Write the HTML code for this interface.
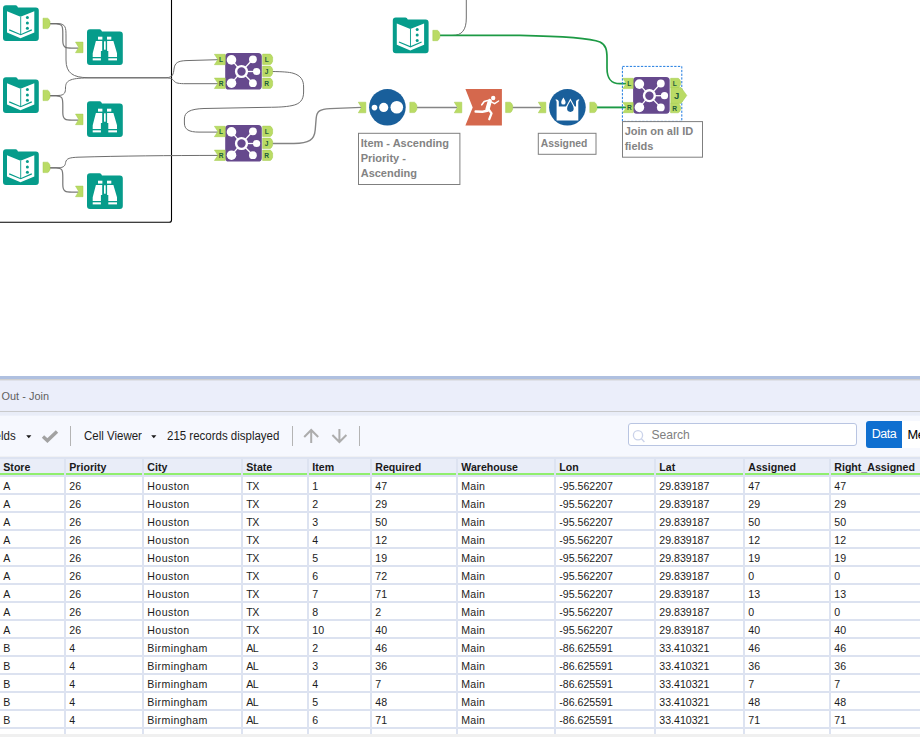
<!DOCTYPE html>
<html lang="en"><head><meta charset="utf-8"><title>Alteryx workflow - Out - Join</title>
<style>
html,body{margin:0;padding:0;background:#fff}
body{width:920px;height:737px;overflow:hidden;position:relative;font-family:"Liberation Sans",sans-serif;color:#1a1a1a}
#panel{position:absolute;left:0;top:376px;width:920px;height:361px;background:#f5f7fd;overflow:hidden}
#band{position:absolute;left:0;top:0;width:920px;height:3px;background:#afc0e0}
#band2{position:absolute;left:0;top:3px;width:920px;height:2px;background:linear-gradient(#cfcfd0 0,#cfcfd0 1px,#dfe1e9 1px,#dfe1e9 2px)}
#title{position:absolute;left:0;top:5px;width:920px;height:30px;background:#ebeefa}
#title span{position:absolute;left:1.4px;top:8.5px;font-size:10.9px;letter-spacing:0.05px;color:#606060;white-space:nowrap}
#tline{position:absolute;left:0;top:35px;width:920px;height:1px;background:#c9cacc}
#tb{position:absolute;left:0;top:36px;width:920px;height:45px;background:linear-gradient(#e9edf8 0,#e9edf8 3px,#f6f8fe 4.5px,#f6f8fe 43.5px,#f0f1f4 44px,#f0f1f4 45px)}
.t{position:absolute;white-space:nowrap;font-size:12.5px;color:#1c1c1c;top:16.5px;transform:scaleX(0.919);transform-origin:0 0}
.vs{position:absolute;top:14px;width:1px;height:20px;background:#b4b4b4}
.dd{position:absolute;top:22.6px}
#search{position:absolute;left:628px;top:11px;width:227px;height:21px;border:1px solid #b9c5e2;border-radius:3px;background:#fff}
#search span{position:absolute;left:22.4px;top:4.2px;font-size:12.1px;color:#808080}
#data{position:absolute;left:866px;top:9px;width:36px;height:26.5px;background:#0f6fd0;border-radius:3px 0 0 3px;color:#fff;font-size:12.5px;letter-spacing:-0.45px;line-height:27px;text-align:center}
#meta{position:absolute;left:902px;top:9px;width:18px;height:26.5px;background:#fff;color:#000;font-size:12.8px;letter-spacing:-0.3px;line-height:27px;white-space:nowrap;overflow:hidden;text-indent:5.4px}
#grid{position:absolute;left:0;top:81px;width:920px;height:276.5px;background:#fff;overflow:hidden}
#hdr{position:absolute;left:0;top:0;width:920px;height:14px;background:#e9edf8;border-top:2px solid #dde3f1}
#gl{position:absolute;left:0;top:16px;width:920px;height:2px;background:#90ee6e}
#gl2{position:absolute;left:0;top:18px;width:920px;height:2px;background:#dde3f1}
.h{position:absolute;top:1.6px;font-weight:bold;font-size:10.6px;white-space:nowrap;color:#1a1a1a}
.r{position:absolute;left:0;width:920px;height:16px;border-bottom:2px solid #dce2f0}
.c{position:absolute;top:3px;font-size:10.6px;white-space:nowrap;color:#1c1c1c}
.cs{position:absolute;top:2px;width:2px;height:275px;background:#dde3f1}
#sb{position:absolute;left:0;top:357.5px;width:920px;height:4px;background:#f0f0f0}
</style></head><body>
<svg width="920" height="376" viewBox="0 0 920 376" style="position:absolute;left:0;top:0;display:block">
<style>.al{font:bold 6.6px "Liberation Sans",sans-serif;fill:#1d5c3c;text-anchor:middle}.an{font:bold 11px "Liberation Sans",sans-serif;fill:#838383}</style>
<path d="M171.5,-1 V220 Q171.5,222.3 169.2,222.3 H-1" fill="none" stroke="#000" stroke-width="1.1"/>
<path d="M50,23.8 H56 C62.6,23.8 62.8,26.5 62.8,33.5 V40.5 C62.8,48.0 66,48.1 72,48.1 H78.5" fill="none" stroke="#7a7a7a" stroke-width="1.25"/>
<path d="M50,95.8 H56 C62.6,95.8 62.8,98.5 62.8,105.5 V112.5 C62.8,120.0 66,120.1 72,120.1 H78.5" fill="none" stroke="#7a7a7a" stroke-width="1.25"/>
<path d="M50,167.8 H56 C62.6,167.8 62.8,170.5 62.8,177.5 V184.5 C62.8,192.0 66,192.1 72,192.1 H78.5" fill="none" stroke="#7a7a7a" stroke-width="1.25"/>
<path d="M50,23.5 H57 C66,23.5 66,28 66,36 V60 C66,73 73,77.6 88,77.7 H166 C173,77.6 173.4,74 174,69 C174.8,62.6 178,61 186,60.6 L218,59.7" fill="none" stroke="#6e6e6e" stroke-width="1.0"/>
<path d="M50,95.5 H58 C65,95.5 65.5,92 65.5,88 C65.5,81 69,78.1 88,77.9 H166 C171,78 172.6,79 174,81 C175.6,83.2 179,83.7 186,83.7 H218" fill="none" stroke="#6e6e6e" stroke-width="1.0"/>
<path d="M50,167.8 H58 C64.6,167.8 65.2,165 65.6,162.5 C66.4,158.2 70,157.6 78,157.2 C120,155.9 170,155.5 218,155.4" fill="none" stroke="#6e6e6e" stroke-width="1.0"/>
<path d="M272.4,71.5 C282,71.7 289,72 293,73.2 C301,75.6 303.6,80 303.6,87 V92 C303.6,100 300,104 292,105.6 C285,107 278,107.2 268,107.3 L204,108.5 C190,109 184.4,112 184.4,119 V123 C184.4,129.6 189,132.1 199,132.1 H218" fill="none" stroke="#6e6e6e" stroke-width="1.0"/>
<path d="M272.4,143.5 H294 C309,143.4 314.4,140 315.2,130 L316.2,118 C316.8,111 320,109.2 330,108.6 L361.5,107.4" fill="none" stroke="#838383" stroke-width="1.4"/>
<path d="M417,107.5 H457" fill="none" stroke="#858585" stroke-width="1.5"/>
<path d="M512.5,107.5 H541" fill="none" stroke="#858585" stroke-width="1.5"/>
<path d="M440,35.5 H452 C462,35.5 466.3,30 466.3,18 V-1" fill="none" stroke="#6e6e6e" stroke-width="1.0"/>
<path d="M440,35.4 H520 C560,36.2 590,38 600,42 C606,45 607,50 607,58 V68 C607,79 611,83.6 620,83.6 H626" fill="none" stroke="#1d9a45" stroke-width="1.7"/>
<path d="M597,107.4 H626" fill="none" stroke="#1d9a45" stroke-width="1.9"/>
<path d="M6,5.3 H15.6 Q17.2,5.3 18.0,7.5 H35.8 Q38.8,7.5 38.8,10.5 V38.099999999999994 Q38.8,41.099999999999994 35.8,41.099999999999994 H6 Q3,41.099999999999994 3,38.099999999999994 V8.3 Q3,5.3 6,5.3 Z" fill="#069c8b"/>
<g transform="translate(3,5.3)">
<path d="M4,6 L17.5,11.5 L31.3,6 V27.3 L17.5,33 L4,27.3 Z" fill="#fff"/>
<path d="M17.7,11.6 V29.4" stroke="#069c8b" stroke-width="0.9" fill="none"/>
<path d="M6.2,24.6 L17.7,29.4 L28.8,24.6" stroke="#069c8b" stroke-width="1.15" fill="none"/>
<circle cx="24.4" cy="12.1" r="1.5" fill="#069c8b"/>
<circle cx="24.4" cy="17.6" r="1.5" fill="#069c8b"/>
<circle cx="24.4" cy="23.0" r="1.5" fill="#069c8b"/>
</g>
<path d="M43,18.2 H47.6 Q48.9,18.5 50.0,21.3 V25.5 Q48.9,28.3 47.6,28.6 H43 Z" fill="#badb65" stroke="#a2cb4c" stroke-width="0.5" stroke-linejoin="round"/>
<path d="M90,29.3 H99.6 Q101.19999999999999,29.3 102.0,31.5 H119.8 Q122.8,31.5 122.8,34.5 V62.099999999999994 Q122.8,65.1 119.8,65.1 H90 Q87,65.1 87,62.099999999999994 V32.3 Q87,29.3 90,29.3 Z" fill="#069c8b"/>
<g transform="translate(87,29.3)" fill="#fff">
<rect x="11" y="7.4" width="4.4" height="2.9"/>
<rect x="20" y="7.4" width="4.3" height="2.9"/>
<path d="M8.9,11.6 H15.2 V21.6 H13.9 V27.8 H5.7 V24 Z"/>
<path d="M26.4,11.6 H20.1 V21.6 H21.3 V27.8 H30 V24 Z"/>
<rect x="5.7" y="29" width="8.2" height="2.1"/>
<rect x="21.3" y="29" width="8.7" height="2.1"/>
<rect x="17" y="12" width="1.7" height="8.4"/>
</g>
<path d="M75.5,42.099999999999994 H83.0 V52.699999999999996 H75.5 L78.7,47.4 Z" fill="#badb65" stroke="#a2cb4c" stroke-width="0.5" stroke-linejoin="round"/>
<path d="M6,77.3 H15.6 Q17.2,77.3 18.0,79.5 H35.8 Q38.8,79.5 38.8,82.5 V110.1 Q38.8,113.1 35.8,113.1 H6 Q3,113.1 3,110.1 V80.3 Q3,77.3 6,77.3 Z" fill="#069c8b"/>
<g transform="translate(3,77.3)">
<path d="M4,6 L17.5,11.5 L31.3,6 V27.3 L17.5,33 L4,27.3 Z" fill="#fff"/>
<path d="M17.7,11.6 V29.4" stroke="#069c8b" stroke-width="0.9" fill="none"/>
<path d="M6.2,24.6 L17.7,29.4 L28.8,24.6" stroke="#069c8b" stroke-width="1.15" fill="none"/>
<circle cx="24.4" cy="12.1" r="1.5" fill="#069c8b"/>
<circle cx="24.4" cy="17.6" r="1.5" fill="#069c8b"/>
<circle cx="24.4" cy="23.0" r="1.5" fill="#069c8b"/>
</g>
<path d="M43,90.2 H47.6 Q48.9,90.5 50.0,93.3 V97.5 Q48.9,100.3 47.6,100.6 H43 Z" fill="#badb65" stroke="#a2cb4c" stroke-width="0.5" stroke-linejoin="round"/>
<path d="M90,101.3 H99.6 Q101.19999999999999,101.3 102.0,103.5 H119.8 Q122.8,103.5 122.8,106.5 V134.1 Q122.8,137.1 119.8,137.1 H90 Q87,137.1 87,134.1 V104.3 Q87,101.3 90,101.3 Z" fill="#069c8b"/>
<g transform="translate(87,101.3)" fill="#fff">
<rect x="11" y="7.4" width="4.4" height="2.9"/>
<rect x="20" y="7.4" width="4.3" height="2.9"/>
<path d="M8.9,11.6 H15.2 V21.6 H13.9 V27.8 H5.7 V24 Z"/>
<path d="M26.4,11.6 H20.1 V21.6 H21.3 V27.8 H30 V24 Z"/>
<rect x="5.7" y="29" width="8.2" height="2.1"/>
<rect x="21.3" y="29" width="8.7" height="2.1"/>
<rect x="17" y="12" width="1.7" height="8.4"/>
</g>
<path d="M75.5,114.1 H83.0 V124.69999999999999 H75.5 L78.7,119.4 Z" fill="#badb65" stroke="#a2cb4c" stroke-width="0.5" stroke-linejoin="round"/>
<path d="M6,149.3 H15.6 Q17.2,149.3 18.0,151.5 H35.8 Q38.8,151.5 38.8,154.5 V182.10000000000002 Q38.8,185.10000000000002 35.8,185.10000000000002 H6 Q3,185.10000000000002 3,182.10000000000002 V152.3 Q3,149.3 6,149.3 Z" fill="#069c8b"/>
<g transform="translate(3,149.3)">
<path d="M4,6 L17.5,11.5 L31.3,6 V27.3 L17.5,33 L4,27.3 Z" fill="#fff"/>
<path d="M17.7,11.6 V29.4" stroke="#069c8b" stroke-width="0.9" fill="none"/>
<path d="M6.2,24.6 L17.7,29.4 L28.8,24.6" stroke="#069c8b" stroke-width="1.15" fill="none"/>
<circle cx="24.4" cy="12.1" r="1.5" fill="#069c8b"/>
<circle cx="24.4" cy="17.6" r="1.5" fill="#069c8b"/>
<circle cx="24.4" cy="23.0" r="1.5" fill="#069c8b"/>
</g>
<path d="M43,162.20000000000002 H47.6 Q48.9,162.5 50.0,165.3 V169.5 Q48.9,172.3 47.6,172.6 H43 Z" fill="#badb65" stroke="#a2cb4c" stroke-width="0.5" stroke-linejoin="round"/>
<path d="M90,173.3 H99.6 Q101.19999999999999,173.3 102.0,175.5 H119.8 Q122.8,175.5 122.8,178.5 V206.10000000000002 Q122.8,209.10000000000002 119.8,209.10000000000002 H90 Q87,209.10000000000002 87,206.10000000000002 V176.3 Q87,173.3 90,173.3 Z" fill="#069c8b"/>
<g transform="translate(87,173.3)" fill="#fff">
<rect x="11" y="7.4" width="4.4" height="2.9"/>
<rect x="20" y="7.4" width="4.3" height="2.9"/>
<path d="M8.9,11.6 H15.2 V21.6 H13.9 V27.8 H5.7 V24 Z"/>
<path d="M26.4,11.6 H20.1 V21.6 H21.3 V27.8 H30 V24 Z"/>
<rect x="5.7" y="29" width="8.2" height="2.1"/>
<rect x="21.3" y="29" width="8.7" height="2.1"/>
<rect x="17" y="12" width="1.7" height="8.4"/>
</g>
<path d="M75.5,186.10000000000002 H83.0 V196.70000000000002 H75.5 L78.7,191.4 Z" fill="#badb65" stroke="#a2cb4c" stroke-width="0.5" stroke-linejoin="round"/>
<path d="M395.8,17.4 H405.40000000000003 Q407.00000000000006,17.4 407.8,19.599999999999998 H425.6 Q428.6,19.599999999999998 428.6,22.599999999999998 V50.199999999999996 Q428.6,53.199999999999996 425.6,53.199999999999996 H395.8 Q392.8,53.199999999999996 392.8,50.199999999999996 V20.4 Q392.8,17.4 395.8,17.4 Z" fill="#069c8b"/>
<g transform="translate(392.8,17.4)">
<path d="M4,6 L17.5,11.5 L31.3,6 V27.3 L17.5,33 L4,27.3 Z" fill="#fff"/>
<path d="M17.7,11.6 V29.4" stroke="#069c8b" stroke-width="0.9" fill="none"/>
<path d="M6.2,24.6 L17.7,29.4 L28.8,24.6" stroke="#069c8b" stroke-width="1.15" fill="none"/>
<circle cx="24.4" cy="12.1" r="1.5" fill="#069c8b"/>
<circle cx="24.4" cy="17.6" r="1.5" fill="#069c8b"/>
<circle cx="24.4" cy="23.0" r="1.5" fill="#069c8b"/>
</g>
<path d="M432.8,30.3 H437.4 Q438.7,30.6 439.8,33.4 V37.6 Q438.7,40.4 437.4,40.7 H432.8 Z" fill="#badb65" stroke="#a2cb4c" stroke-width="0.5" stroke-linejoin="round"/>
<rect x="225.2" y="52.9" width="36.6" height="36.6" rx="3.6" fill="#66498d"/>
<g transform="translate(225.2,52.9)">
<path d="M16.3,18.6 L6.3,7.0" stroke="#fff" stroke-width="1.3"/>
<path d="M16.3,18.6 L6.3,30.3" stroke="#fff" stroke-width="1.3"/>
<path d="M16.3,18.6 L27.7,6.4" stroke="#fff" stroke-width="1.3"/>
<path d="M16.3,18.6 L27.7,30.3" stroke="#fff" stroke-width="1.3"/>
<path d="M16.3,18.6 L31.3,18.6" stroke="#fff" stroke-width="1.3"/>
<circle cx="16.3" cy="18.6" r="5.4" fill="#66498d" stroke="#fff" stroke-width="2.4"/>
<circle cx="6.3" cy="7" r="4.8" fill="#fff"/>
<circle cx="6.3" cy="30.3" r="4.8" fill="#fff"/>
<circle cx="27.7" cy="6.4" r="3.9" fill="#fff"/>
<circle cx="27.7" cy="30.3" r="3.9" fill="#fff"/>
<circle cx="31.4" cy="18.6" r="3.6" fill="#fff"/>
</g>
<path d="M214.4,54.3 H225.20000000000002 V64.7 H214.4 L217.9,59.5 Z" fill="#badb65" stroke="#a2cb4c" stroke-width="0.5" stroke-linejoin="round"/>
<text x="221.1" y="62.0" class="al">L</text>
<path d="M214.4,78.1 H225.20000000000002 V88.5 H214.4 L217.9,83.3 Z" fill="#badb65" stroke="#a2cb4c" stroke-width="0.5" stroke-linejoin="round"/>
<text x="221.1" y="85.8" class="al">R</text>
<path d="M262.6,54.1 H270.2 Q271.5,54.4 272.6,57.2 V61.4 Q271.5,64.2 270.2,64.5 H262.6 Z" fill="#badb65" stroke="#a2cb4c" stroke-width="0.5" stroke-linejoin="round"/>
<text x="266.7" y="61.8" class="al">L</text>
<path d="M262.6,66.1 H270.2 Q271.5,66.4 272.6,69.2 V73.4 Q271.5,76.2 270.2,76.5 H262.6 Z" fill="#badb65" stroke="#a2cb4c" stroke-width="0.5" stroke-linejoin="round"/>
<text x="266.7" y="73.8" class="al">J</text>
<path d="M262.6,78.1 H270.2 Q271.5,78.4 272.6,81.2 V85.4 Q271.5,88.2 270.2,88.5 H262.6 Z" fill="#badb65" stroke="#a2cb4c" stroke-width="0.5" stroke-linejoin="round"/>
<text x="266.7" y="85.8" class="al">R</text>
<rect x="225.2" y="124.9" width="36.6" height="36.6" rx="3.6" fill="#66498d"/>
<g transform="translate(225.2,124.9)">
<path d="M16.3,18.6 L6.3,7.0" stroke="#fff" stroke-width="1.3"/>
<path d="M16.3,18.6 L6.3,30.3" stroke="#fff" stroke-width="1.3"/>
<path d="M16.3,18.6 L27.7,6.4" stroke="#fff" stroke-width="1.3"/>
<path d="M16.3,18.6 L27.7,30.3" stroke="#fff" stroke-width="1.3"/>
<path d="M16.3,18.6 L31.3,18.6" stroke="#fff" stroke-width="1.3"/>
<circle cx="16.3" cy="18.6" r="5.4" fill="#66498d" stroke="#fff" stroke-width="2.4"/>
<circle cx="6.3" cy="7" r="4.8" fill="#fff"/>
<circle cx="6.3" cy="30.3" r="4.8" fill="#fff"/>
<circle cx="27.7" cy="6.4" r="3.9" fill="#fff"/>
<circle cx="27.7" cy="30.3" r="3.9" fill="#fff"/>
<circle cx="31.4" cy="18.6" r="3.6" fill="#fff"/>
</g>
<path d="M214.4,126.30000000000001 H225.20000000000002 V136.70000000000002 H214.4 L217.9,131.5 Z" fill="#badb65" stroke="#a2cb4c" stroke-width="0.5" stroke-linejoin="round"/>
<text x="221.1" y="134.0" class="al">L</text>
<path d="M214.4,150.1 H225.20000000000002 V160.5 H214.4 L217.9,155.3 Z" fill="#badb65" stroke="#a2cb4c" stroke-width="0.5" stroke-linejoin="round"/>
<text x="221.1" y="157.8" class="al">R</text>
<path d="M262.6,126.10000000000001 H270.2 Q271.5,126.4 272.6,129.2 V133.4 Q271.5,136.2 270.2,136.5 H262.6 Z" fill="#badb65" stroke="#a2cb4c" stroke-width="0.5" stroke-linejoin="round"/>
<text x="266.7" y="133.8" class="al">L</text>
<path d="M262.6,138.1 H270.2 Q271.5,138.4 272.6,141.2 V145.4 Q271.5,148.2 270.2,148.5 H262.6 Z" fill="#badb65" stroke="#a2cb4c" stroke-width="0.5" stroke-linejoin="round"/>
<text x="266.7" y="145.8" class="al">J</text>
<path d="M262.6,150.1 H270.2 Q271.5,150.4 272.6,153.2 V157.4 Q271.5,160.2 270.2,160.5 H262.6 Z" fill="#badb65" stroke="#a2cb4c" stroke-width="0.5" stroke-linejoin="round"/>
<text x="266.7" y="157.8" class="al">R</text>
<path d="M358.3,102.2 H365.8 V112.8 H358.3 L361.5,107.5 Z" fill="#badb65" stroke="#a2cb4c" stroke-width="0.5" stroke-linejoin="round"/>
<circle cx="387.4" cy="107.3" r="18.3" fill="#195f9b"/>
<circle cx="374.5" cy="107.6" r="2.8" fill="#fff"/>
<circle cx="383.7" cy="107.4" r="4.6" fill="#fff"/>
<circle cx="396.8" cy="107.2" r="6.3" fill="#fff"/>
<path d="M409.8,102.2 H414.4 Q415.7,102.5 416.8,105.3 V109.5 Q415.7,112.3 414.4,112.6 H409.8 Z" fill="#badb65" stroke="#a2cb4c" stroke-width="0.5" stroke-linejoin="round"/>
<path d="M454.3,102.2 H461.8 V112.8 H454.3 L457.5,107.5 Z" fill="#badb65" stroke="#a2cb4c" stroke-width="0.5" stroke-linejoin="round"/>
<path d="M465.4,89.1 H501.9 V125.6 H465.4 L472.7,107.4 Z" fill="#d5684d"/>
<g fill="none" stroke="#fff" stroke-linecap="round" stroke-linejoin="round">
<path d="M489.8,101 L487.4,109.6" stroke-width="4.2"/>
<path d="M487.6,100.6 L484.2,101.6 L481.8,104.8" stroke-width="1.6"/>
<path d="M491.3,101.9 L494.6,103.7 L498.6,101" stroke-width="1.4"/>
<path d="M487.2,110.8 L482.4,111.7 L475.6,111.5" stroke-width="2.4"/>
<path d="M489,109.8 L491.5,113.4 L489.3,119.2" stroke-width="2.3"/>
</g>
<circle cx="493.2" cy="98" r="2.2" fill="#fff"/>
<path d="M505.6,102.2 H510.2 Q511.5,102.5 512.6,105.3 V109.5 Q511.5,112.3 510.2,112.6 H505.6 Z" fill="#badb65" stroke="#a2cb4c" stroke-width="0.5" stroke-linejoin="round"/>
<path d="M538.3,102.2 H545.8 V112.8 H538.3 L541.5,107.5 Z" fill="#badb65" stroke="#a2cb4c" stroke-width="0.5" stroke-linejoin="round"/>
<circle cx="567.4" cy="107.3" r="18.3" fill="#195f9b"/>
<path d="M555.9,99.2 Q558.6,99.6 558.8,101.6 V106.6 H576 V101.6 Q576.2,99.6 578.9,99.2 L579.4,100 Q578.3,100.6 578.3,102 V120.5 H556.6 V102 Q556.6,100.6 555.5,100 Z" fill="#fff"/>
<path d="M570.4,98.6 L575,107 H565.8 Z" fill="#fff"/>
<path d="M570.4,100.8 C571.4,103 573.7,106 573.7,108.6 A3.3,3.3 0 0 1 567.1,108.6 C567.1,106 569.4,103 570.4,100.8 Z" fill="#195f9b"/>
<path d="M563.4,97.6 C564,99 565.6,100.6 565.6,102.4 A2.2,2.2 0 0 1 561.2,102.4 C561.2,100.6 562.8,99 563.4,97.6 Z" fill="#fff"/>
<path d="M589.8,102.2 H594.4 Q595.7,102.5 596.8,105.3 V109.5 Q595.7,112.3 594.4,112.6 H589.8 Z" fill="#badb65" stroke="#a2cb4c" stroke-width="0.5" stroke-linejoin="round"/>
<rect x="622.4" y="66.4" width="59.4" height="55" fill="none" stroke="#1f7be0" stroke-width="1" stroke-dasharray="2.3,1.4"/>
<rect x="633.1" y="77.1" width="36.6" height="36.6" rx="3.6" fill="#66498d"/>
<g transform="translate(633.1,77.1)">
<path d="M16.3,18.6 L6.3,7.0" stroke="#fff" stroke-width="1.3"/>
<path d="M16.3,18.6 L6.3,30.3" stroke="#fff" stroke-width="1.3"/>
<path d="M16.3,18.6 L27.7,6.4" stroke="#fff" stroke-width="1.3"/>
<path d="M16.3,18.6 L27.7,30.3" stroke="#fff" stroke-width="1.3"/>
<path d="M16.3,18.6 L31.3,18.6" stroke="#fff" stroke-width="1.3"/>
<circle cx="16.3" cy="18.6" r="5.4" fill="#66498d" stroke="#fff" stroke-width="2.4"/>
<circle cx="6.3" cy="7" r="4.8" fill="#fff"/>
<circle cx="6.3" cy="30.3" r="4.8" fill="#fff"/>
<circle cx="27.7" cy="6.4" r="3.9" fill="#fff"/>
<circle cx="27.7" cy="30.3" r="3.9" fill="#fff"/>
<circle cx="31.4" cy="18.6" r="3.6" fill="#fff"/>
</g>
<path d="M622.8,78.3 H633.1999999999999 V88.6 H622.8 L626.3,83.5 Z" fill="#badb65" stroke="#a2cb4c" stroke-width="0.5" stroke-linejoin="round"/>
<text x="629.3" y="86.0" class="al">L</text>
<path d="M622.8,102.4 H633.1999999999999 V112.7 H622.8 L626.3,107.6 Z" fill="#badb65" stroke="#a2cb4c" stroke-width="0.5" stroke-linejoin="round"/>
<text x="629.3" y="110.1" class="al">R</text>
<path d="M670.6,78.3 H678.2 Q679.5,78.6 680.6,81.4 V84.6 Q679.5,87.4 678.2,87.7 H670.6 Z" fill="#badb65" stroke="#a2cb4c" stroke-width="0.5" stroke-linejoin="round"/>
<text x="674.7" y="85.5" class="al">L</text>
<path d="M670.6,103.4 H678.2 Q679.5,103.7 680.6,106.5 V109.7 Q679.5,112.5 678.2,112.8 H670.6 Z" fill="#badb65" stroke="#a2cb4c" stroke-width="0.5" stroke-linejoin="round"/>
<text x="674.7" y="110.6" class="al">R</text>
<path d="M670.8,87.5 H681 L686.8,95.4 L681,103.4 H670.8 Z" fill="#badb65" stroke="#a2cb4c" stroke-width="0.5" stroke-linejoin="round"/>
<text x="676.6" y="98.6" style="font:bold 9.5px 'Liberation Sans',sans-serif;fill:#1d5c3c;text-anchor:middle">J</text>
<rect x="358.5" y="133.3" width="101.4" height="51.2" fill="#fff" stroke="#7f7f7f" stroke-width="1"/>
<text x="360.7" y="146.5" class="an">Item - Ascending</text>
<text x="360.7" y="161.5" class="an">Priority -</text>
<text x="360.7" y="176.5" class="an">Ascending</text>
<rect x="538.3" y="133.3" width="57.7" height="21" fill="#fff" stroke="#7f7f7f" stroke-width="1"/>
<text x="540.6999999999999" y="146.5" class="an" textLength="46.6" lengthAdjust="spacingAndGlyphs">Assigned</text>
<rect x="622.5" y="121.6" width="80" height="35.6" fill="#fff" stroke="#7f7f7f" stroke-width="1"/>
<text x="624.7" y="134.8" class="an">Join on all ID</text>
<text x="624.7" y="149.8" class="an">fields</text>
</svg>
<div id="panel">
<div id="band"></div><div id="band2"></div>
<div id="title"><span>Out - Join</span></div><div id="tline"></div>
<div id="tb">
<span class="t" style="left:-8.2px">ields</span><svg class="dd" style="left:25.8px" width="6" height="4" viewBox="0 0 6 4"><path d="M0.2,0.3 H5.4 L2.8,3.3 Z" fill="#1a1a1a"/></svg>
<svg style="position:absolute;left:41px;top:17px" width="19" height="15" viewBox="0 0 19 15"><path d="M2,7.6 L6.4,11.6 L16,2.4" fill="none" stroke="#a2a2a2" stroke-width="3.4"/></svg>
<i class="vs" style="left:70px"></i>
<span class="t" style="left:83.5px">Cell Viewer</span><svg class="dd" style="left:150.9px" width="6" height="4" viewBox="0 0 6 4"><path d="M0.2,0.3 H5.4 L2.8,3.3 Z" fill="#1a1a1a"/></svg>
<span class="t" style="left:167px">215 records displayed</span>
<i class="vs" style="left:292px"></i>
<svg style="position:absolute;left:301px;top:16px" width="50" height="16" viewBox="0 0 50 16" fill="none" stroke="#adadad" stroke-width="2"><path d="M10.2,15 V2.4 M3.2,9 L10.2,2 L17.2,9"/><path d="M38.4,1 V13.6 M31.4,7 L38.4,14 L45.4,7"/></svg>
<i class="vs" style="left:359px"></i>
<div id="search"><svg style="position:absolute;left:2.5px;top:4.5px" width="15" height="15" viewBox="0 0 15 15" fill="none" stroke="#cbd3ea" stroke-width="1.3"><circle cx="6" cy="6.2" r="4.6"/><path d="M9.4,9.8 L12.4,13"/></svg><span>Search</span></div>
<div id="data">Data</div><div id="meta">Metadata</div>
</div>
<div id="grid">
<div id="hdr">
<span class="h" style="left:3.3px">Store</span>
<span class="h" style="left:69.3px">Priority</span>
<span class="h" style="left:147.3px">City</span>
<span class="h" style="left:246.3px">State</span>
<span class="h" style="left:312.3px">Item</span>
<span class="h" style="left:375.3px">Required</span>
<span class="h" style="left:461.3px">Warehouse</span>
<span class="h" style="left:559.3px">Lon</span>
<span class="h" style="left:659.3px">Lat</span>
<span class="h" style="left:748.3px">Assigned</span>
<span class="h" style="left:834.3px">Right_Assigned</span>
</div><div id="gl"></div><div id="gl2"></div>
<div class="r" style="top:20px">
<span class="c" style="left:3.3px">A</span><span class="c" style="left:69.3px">26</span><span class="c" style="left:147.3px;letter-spacing:0.4px">Houston</span><span class="c" style="left:246.3px;letter-spacing:-0.5px">TX</span><span class="c" style="left:312.3px">1</span><span class="c" style="left:375.3px">47</span><span class="c" style="left:461.3px;letter-spacing:0.2px">Main</span><span class="c" style="left:559.3px">-95.562207</span><span class="c" style="left:659.3px">29.839187</span><span class="c" style="left:748.3px">47</span><span class="c" style="left:834.3px">47</span>
</div>
<div class="r" style="top:38px">
<span class="c" style="left:3.3px">A</span><span class="c" style="left:69.3px">26</span><span class="c" style="left:147.3px;letter-spacing:0.4px">Houston</span><span class="c" style="left:246.3px;letter-spacing:-0.5px">TX</span><span class="c" style="left:312.3px">2</span><span class="c" style="left:375.3px">29</span><span class="c" style="left:461.3px;letter-spacing:0.2px">Main</span><span class="c" style="left:559.3px">-95.562207</span><span class="c" style="left:659.3px">29.839187</span><span class="c" style="left:748.3px">29</span><span class="c" style="left:834.3px">29</span>
</div>
<div class="r" style="top:56px">
<span class="c" style="left:3.3px">A</span><span class="c" style="left:69.3px">26</span><span class="c" style="left:147.3px;letter-spacing:0.4px">Houston</span><span class="c" style="left:246.3px;letter-spacing:-0.5px">TX</span><span class="c" style="left:312.3px">3</span><span class="c" style="left:375.3px">50</span><span class="c" style="left:461.3px;letter-spacing:0.2px">Main</span><span class="c" style="left:559.3px">-95.562207</span><span class="c" style="left:659.3px">29.839187</span><span class="c" style="left:748.3px">50</span><span class="c" style="left:834.3px">50</span>
</div>
<div class="r" style="top:74px">
<span class="c" style="left:3.3px">A</span><span class="c" style="left:69.3px">26</span><span class="c" style="left:147.3px;letter-spacing:0.4px">Houston</span><span class="c" style="left:246.3px;letter-spacing:-0.5px">TX</span><span class="c" style="left:312.3px">4</span><span class="c" style="left:375.3px">12</span><span class="c" style="left:461.3px;letter-spacing:0.2px">Main</span><span class="c" style="left:559.3px">-95.562207</span><span class="c" style="left:659.3px">29.839187</span><span class="c" style="left:748.3px">12</span><span class="c" style="left:834.3px">12</span>
</div>
<div class="r" style="top:92px">
<span class="c" style="left:3.3px">A</span><span class="c" style="left:69.3px">26</span><span class="c" style="left:147.3px;letter-spacing:0.4px">Houston</span><span class="c" style="left:246.3px;letter-spacing:-0.5px">TX</span><span class="c" style="left:312.3px">5</span><span class="c" style="left:375.3px">19</span><span class="c" style="left:461.3px;letter-spacing:0.2px">Main</span><span class="c" style="left:559.3px">-95.562207</span><span class="c" style="left:659.3px">29.839187</span><span class="c" style="left:748.3px">19</span><span class="c" style="left:834.3px">19</span>
</div>
<div class="r" style="top:110px">
<span class="c" style="left:3.3px">A</span><span class="c" style="left:69.3px">26</span><span class="c" style="left:147.3px;letter-spacing:0.4px">Houston</span><span class="c" style="left:246.3px;letter-spacing:-0.5px">TX</span><span class="c" style="left:312.3px">6</span><span class="c" style="left:375.3px">72</span><span class="c" style="left:461.3px;letter-spacing:0.2px">Main</span><span class="c" style="left:559.3px">-95.562207</span><span class="c" style="left:659.3px">29.839187</span><span class="c" style="left:748.3px">0</span><span class="c" style="left:834.3px">0</span>
</div>
<div class="r" style="top:128px">
<span class="c" style="left:3.3px">A</span><span class="c" style="left:69.3px">26</span><span class="c" style="left:147.3px;letter-spacing:0.4px">Houston</span><span class="c" style="left:246.3px;letter-spacing:-0.5px">TX</span><span class="c" style="left:312.3px">7</span><span class="c" style="left:375.3px">71</span><span class="c" style="left:461.3px;letter-spacing:0.2px">Main</span><span class="c" style="left:559.3px">-95.562207</span><span class="c" style="left:659.3px">29.839187</span><span class="c" style="left:748.3px">13</span><span class="c" style="left:834.3px">13</span>
</div>
<div class="r" style="top:146px">
<span class="c" style="left:3.3px">A</span><span class="c" style="left:69.3px">26</span><span class="c" style="left:147.3px;letter-spacing:0.4px">Houston</span><span class="c" style="left:246.3px;letter-spacing:-0.5px">TX</span><span class="c" style="left:312.3px">8</span><span class="c" style="left:375.3px">2</span><span class="c" style="left:461.3px;letter-spacing:0.2px">Main</span><span class="c" style="left:559.3px">-95.562207</span><span class="c" style="left:659.3px">29.839187</span><span class="c" style="left:748.3px">0</span><span class="c" style="left:834.3px">0</span>
</div>
<div class="r" style="top:164px">
<span class="c" style="left:3.3px">A</span><span class="c" style="left:69.3px">26</span><span class="c" style="left:147.3px;letter-spacing:0.4px">Houston</span><span class="c" style="left:246.3px;letter-spacing:-0.5px">TX</span><span class="c" style="left:312.3px">10</span><span class="c" style="left:375.3px">40</span><span class="c" style="left:461.3px;letter-spacing:0.2px">Main</span><span class="c" style="left:559.3px">-95.562207</span><span class="c" style="left:659.3px">29.839187</span><span class="c" style="left:748.3px">40</span><span class="c" style="left:834.3px">40</span>
</div>
<div class="r" style="top:182px">
<span class="c" style="left:3.3px">B</span><span class="c" style="left:69.3px">4</span><span class="c" style="left:147.3px;letter-spacing:0.4px">Birmingham</span><span class="c" style="left:246.3px;letter-spacing:-0.5px">AL</span><span class="c" style="left:312.3px">2</span><span class="c" style="left:375.3px">46</span><span class="c" style="left:461.3px;letter-spacing:0.2px">Main</span><span class="c" style="left:559.3px">-86.625591</span><span class="c" style="left:659.3px">33.410321</span><span class="c" style="left:748.3px">46</span><span class="c" style="left:834.3px">46</span>
</div>
<div class="r" style="top:200px">
<span class="c" style="left:3.3px">B</span><span class="c" style="left:69.3px">4</span><span class="c" style="left:147.3px;letter-spacing:0.4px">Birmingham</span><span class="c" style="left:246.3px;letter-spacing:-0.5px">AL</span><span class="c" style="left:312.3px">3</span><span class="c" style="left:375.3px">36</span><span class="c" style="left:461.3px;letter-spacing:0.2px">Main</span><span class="c" style="left:559.3px">-86.625591</span><span class="c" style="left:659.3px">33.410321</span><span class="c" style="left:748.3px">36</span><span class="c" style="left:834.3px">36</span>
</div>
<div class="r" style="top:218px">
<span class="c" style="left:3.3px">B</span><span class="c" style="left:69.3px">4</span><span class="c" style="left:147.3px;letter-spacing:0.4px">Birmingham</span><span class="c" style="left:246.3px;letter-spacing:-0.5px">AL</span><span class="c" style="left:312.3px">4</span><span class="c" style="left:375.3px">7</span><span class="c" style="left:461.3px;letter-spacing:0.2px">Main</span><span class="c" style="left:559.3px">-86.625591</span><span class="c" style="left:659.3px">33.410321</span><span class="c" style="left:748.3px">7</span><span class="c" style="left:834.3px">7</span>
</div>
<div class="r" style="top:236px">
<span class="c" style="left:3.3px">B</span><span class="c" style="left:69.3px">4</span><span class="c" style="left:147.3px;letter-spacing:0.4px">Birmingham</span><span class="c" style="left:246.3px;letter-spacing:-0.5px">AL</span><span class="c" style="left:312.3px">5</span><span class="c" style="left:375.3px">48</span><span class="c" style="left:461.3px;letter-spacing:0.2px">Main</span><span class="c" style="left:559.3px">-86.625591</span><span class="c" style="left:659.3px">33.410321</span><span class="c" style="left:748.3px">48</span><span class="c" style="left:834.3px">48</span>
</div>
<div class="r" style="top:254px">
<span class="c" style="left:3.3px">B</span><span class="c" style="left:69.3px">4</span><span class="c" style="left:147.3px;letter-spacing:0.4px">Birmingham</span><span class="c" style="left:246.3px;letter-spacing:-0.5px">AL</span><span class="c" style="left:312.3px">6</span><span class="c" style="left:375.3px">71</span><span class="c" style="left:461.3px;letter-spacing:0.2px">Main</span><span class="c" style="left:559.3px">-86.625591</span><span class="c" style="left:659.3px">33.410321</span><span class="c" style="left:748.3px">71</span><span class="c" style="left:834.3px">71</span>
</div>
<div class="r" style="top:272px">
<span class="c" style="left:3.3px">B</span><span class="c" style="left:69.3px">4</span><span class="c" style="left:147.3px;letter-spacing:0.4px">Birmingham</span><span class="c" style="left:246.3px;letter-spacing:-0.5px">AL</span><span class="c" style="left:312.3px">7</span><span class="c" style="left:375.3px">33</span><span class="c" style="left:461.3px;letter-spacing:0.2px">Main</span><span class="c" style="left:559.3px">-86.625591</span><span class="c" style="left:659.3px">33.410321</span><span class="c" style="left:748.3px">33</span><span class="c" style="left:834.3px">33</span>
</div>
<i class="cs" style="left:64.0px"></i>
<i class="cs" style="left:142.0px"></i>
<i class="cs" style="left:241.0px"></i>
<i class="cs" style="left:307.0px"></i>
<i class="cs" style="left:370.0px"></i>
<i class="cs" style="left:456.0px"></i>
<i class="cs" style="left:554.0px"></i>
<i class="cs" style="left:654.0px"></i>
<i class="cs" style="left:743.0px"></i>
<i class="cs" style="left:829.0px"></i>
</div>
<div id="sb"></div>
</div>
</body></html>
